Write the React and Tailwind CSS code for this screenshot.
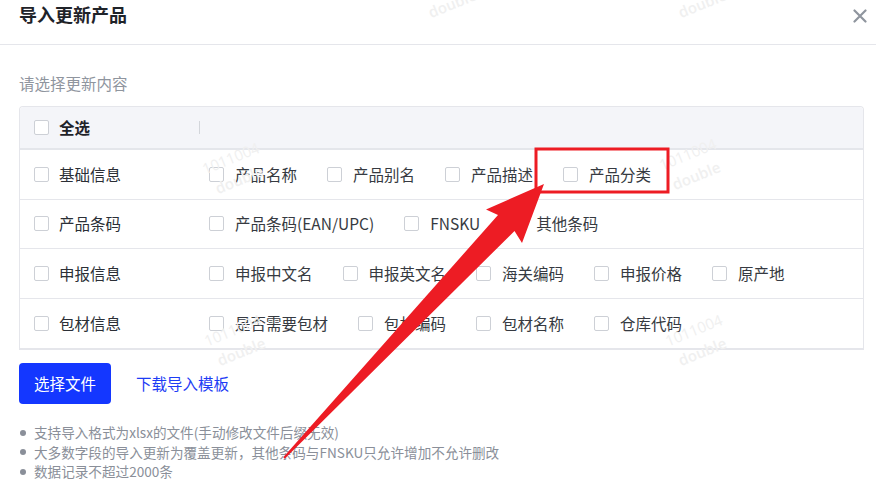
import React from 'react';

const FONT = { fontFamily: '"Noto Sans CJK SC", "Noto Sans", sans-serif' };

const groups = [
  { label: '基础信息', items: ['产品名称', '产品别名', '产品描述', '产品分类'] },
  { label: '产品条码', items: ['产品条码(EAN/UPC)', 'FNSKU', '其他条码'] },
  { label: '申报信息', items: ['申报中文名', '申报英文名', '海关编码', '申报价格', '原产地'] },
  { label: '包材信息', items: ['是否需要包材', '包材编码', '包材名称', '仓库代码'] },
];

const tips = [
  '支持导入格式为xlsx的文件(手动修改文件后缀无效)',
  '大多数字段的导入更新为覆盖更新，其他条码与FNSKU只允许增加不允许删改',
  '数据记录不超过2000条',
];

// faint tiled watermark
const marks = [
  { x: 418, y: -30 },
  { x: 668, y: -30 },
  { x: 205, y: 146 },
  { x: 662, y: 142 },
  { x: 207, y: 318 },
  { x: 668, y: 318 },
];

const Checkbox = () => (
  <span className="inline-block w-[15px] h-[15px] shrink-0 border border-[#cdd0d6] rounded-[2px] bg-white" />
);

export default function App() {
  return (
    <div className="relative w-[876px] h-[486px] overflow-hidden bg-white text-[#2b2f36]" style={FONT}>
      {/* header */}
      <div className="flex items-start justify-between h-[45px] border-b border-[#e5e6eb] pl-[19px] pr-[9px] pt-[1px]">
        <h1 className="text-[18px] leading-[27px] font-bold text-[#1f2329]">导入更新产品</h1>
        <svg width="14" height="14" viewBox="0 0 14 14" className="mt-[8px]">
          <path d="M1.5 1.5 L12.5 12.5 M12.5 1.5 L1.5 12.5" stroke="#8f959e" strokeWidth="2.2" strokeLinecap="round" />
        </svg>
      </div>

      <div className="pl-[19px] pr-[12px]">
        <p className="mt-[27px] text-[15.5px] leading-[22px] text-[#8f959e]">请选择更新内容</p>

        {/* field table */}
        <div className="mt-[12px] border border-[#e5e6eb] border-b-2 rounded-t-[4px] text-[15.5px]">
          <div className="flex items-center h-[43px] bg-[#f4f5f9] border-b-2 border-[#e4e6eb] rounded-t-[4px]">
            <div className="flex items-center w-[179px] pl-[14px] gap-[10px]">
              <Checkbox />
              <span className="font-bold text-[#1f2329]">全选</span>
            </div>
            <span className="w-px h-[13px] bg-[#d3d6db]" />
          </div>
          {groups.map((g, i) => (
            <div
              key={g.label}
              className={`flex items-center h-[49.5px] ${i < groups.length - 1 ? 'border-b border-[#e5e6eb]' : ''}`}
            >
              <div className="flex items-center w-[189px] pl-[14px] gap-[10px]">
                <Checkbox />
                <span>{g.label}</span>
              </div>
              <div className="flex items-center gap-[30px] text-[#363a41]">
                {g.items.map((it) => (
                  <label key={it} className="flex items-center gap-[11px]">
                    <Checkbox />
                    <span>{it}</span>
                  </label>
                ))}
              </div>
            </div>
          ))}
        </div>

        {/* actions */}
        <div className="flex items-center gap-[25px] mt-[13px]">
          <button className="h-[41px] w-[92px] rounded-[4px] bg-[#1437ff] text-white text-[15.5px]">选择文件</button>
          <a className="text-[15.5px] text-[#1d3cf5]">下载导入模板</a>
        </div>

        <ul className="mt-[19px] text-[13.6px] leading-[19.5px] text-[#8a8f99]">
          {tips.map((t) => (
            <li key={t} className="flex items-center gap-[8px] pl-[1px]">
              <span className="w-[6px] h-[6px] rounded-full bg-[#8a8f99]" />
              <span>{t}</span>
            </li>
          ))}
        </ul>
      </div>

      {marks.map((m, i) => (
        <div
          key={i}
          className="absolute pointer-events-none text-[15px] leading-[23px] text-[#f0f0f0] -rotate-[22deg] text-center"
          style={{ left: m.x, top: m.y, fontFamily: '"Open Sans", sans-serif' }}
        >
          <div>1011004</div>
          <div className="font-semibold">double</div>
        </div>
      ))}

      {/* annotation: red frame + arrow */}
      <svg className="absolute inset-0 pointer-events-none" width="876" height="486" viewBox="0 0 876 486">
        <rect x="536" y="149" width="132" height="43" fill="none" stroke="#ed1c24" strokeWidth="3" />
        <polygon
          fill="#ed1c24"
          points="284.7,458.7 514.5,231 522,243 544,184 486,209.5 498,215 283.3,457.3"
        />
      </svg>
    </div>
  );
}
